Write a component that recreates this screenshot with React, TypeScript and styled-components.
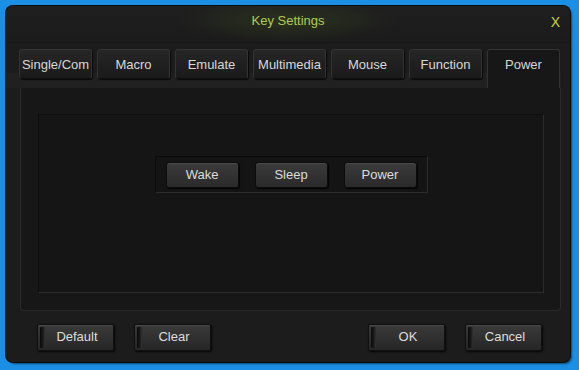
import styled, { createGlobalStyle } from "styled-components";

const GlobalStyle = createGlobalStyle`
  html, body {
    margin: 0;
    padding: 0;
    background: #1a8fe3;
  }
  body {
    font-family: "Liberation Sans", Arial, sans-serif;
  }
`;

const Frame = styled.div`
  width: 579px;
  height: 370px;
  box-sizing: border-box;
  padding: 6px 9px 8px 6px;
`;

const Window = styled.div`
  height: 100%;
  background: #1c1c1c;
  border-radius: 7px;
  box-shadow: 0 0 0 1px #0c0c0c, 2px 2px 2px rgba(0, 0, 0, 0.5);
  display: flex;
  flex-direction: column;
  overflow: hidden;
`;

const TitleBar = styled.div`
  height: 36px;
  position: relative;
  display: flex;
  align-items: center;
  justify-content: center;
  background:
    radial-gradient(ellipse 110px 22px at 50% 40%, rgba(90, 120, 30, 0.22), transparent),
    linear-gradient(#1f1f1f, #1b1b1b);
  border-bottom: 1px solid #171717;
`;

const Title = styled.span`
  color: #aecb55;
  font-size: 13px;
  margin-top: -7px;
`;

const Close = styled.span`
  position: absolute;
  right: 10px;
  top: 8px;
  color: #c8d23a;
  font-size: 14px;
`;

const TabRow = styled.div`
  display: flex;
  gap: 5px;
  padding: 6px 0 0 13px;
  height: 39px;
  align-items: flex-start;
  background: linear-gradient(#1c1c1c 0, #1c1c1c 30px, #202020 30px);
  margin-right: 9px;
`;

const Tab = styled.div<{ $active?: boolean }>`
  width: 73px;
  height: ${(p) => (p.$active ? "39px" : "30px")};
  box-sizing: border-box;
  display: flex;
  align-items: flex-start;
  justify-content: center;
  padding-top: 7px;
  font-size: 13px;
  color: #d8d8d8;
  border-radius: 3px 3px ${(p) => (p.$active ? "0 0" : "3px 3px")};
  border: 1px solid #333;
  border-bottom: ${(p) => (p.$active ? "none" : "1px solid #101010")};
  background: ${(p) =>
    p.$active ? "#171717" : "linear-gradient(#262626, #1a1a1a)"};
  box-shadow: ${(p) =>
    p.$active ? "none" : "1px 1px 1px rgba(0,0,0,0.7)"};
  white-space: nowrap;
`;

const Panel = styled.div`
  margin: 0 9px 0 14px;
  height: 223px;
  box-sizing: border-box;
  background: #171717;
  border: 1px solid #2a2a2a;
  border-top: none;
  border-radius: 0 0 4px 4px;
  padding: 26px 16px 17px 17px;
`;

const Inner = styled.div`
  height: 100%;
  box-sizing: border-box;
  border: 1px solid #2b2b2b;
  border-top-color: #0e0e0e;
  border-left-color: #0e0e0e;
  background: #151515;
  display: flex;
  justify-content: center;
  align-items: flex-start;
  padding-top: 41px;
`;

const Group = styled.div`
  width: 273px;
  height: 37px;
  box-sizing: border-box;
  border: 1px solid #2c2c2c;
  border-top-color: #0b0b0b;
  border-left-color: #0b0b0b;
  background: #141414;
  display: flex;
  justify-content: space-between;
  align-items: flex-start;
  padding: 5px 10px 0 10px;
`;

const GroupButton = styled.div`
  width: 73px;
  height: 26px;
  box-sizing: border-box;
  border-radius: 3px;
  border: 1px solid #0c0c0c;
  background: linear-gradient(#3b3b3b, #2a2a2a);
  box-shadow: inset 0 1px 0 #4a4a4a, 1px 1px 1px rgba(0, 0, 0, 0.8);
  color: #dcdcdc;
  font-size: 13px;
  display: flex;
  align-items: center;
  justify-content: center;
  padding-bottom: 2px;
`;

const Footer = styled.div`
  display: flex;
  justify-content: space-between;
  padding: 13px 28px 0 31px;
`;

const FooterGroup = styled.div`
  display: flex;
  gap: 20px;
`;

const FooterButton = styled.div`
  width: 77px;
  height: 27px;
  box-sizing: border-box;
  border-radius: 2px;
  border: 1px solid #101010;
  background: linear-gradient(#3a3a3a, #262626);
  box-shadow: inset 0 1px 0 #484848, 1px 1px 2px rgba(0, 0, 0, 0.8);
  color: #dedede;
  font-size: 13px;
  display: flex;
  align-items: center;
`;

const Stripe = styled.span`
  width: 5px;
  align-self: stretch;
  margin: 2px 0 2px 2px;
  background: linear-gradient(90deg, #0a0a0a, #1a1a1a 60%, #333);
  border-radius: 1px;
`;

const Label = styled.span`
  flex: 1;
  text-align: center;
  padding: 0 4px 2px 0;
`;

const tabs = ["Single/Com", "Macro", "Emulate", "Multimedia", "Mouse", "Function", "Power"];

export default function App() {
  return (
    <>
      <GlobalStyle />
      <Frame>
        <Window>
          <TitleBar>
            <Title>Key Settings</Title>
            <Close>X</Close>
          </TitleBar>
          <TabRow>
            {tabs.map((t) => (
              <Tab key={t} $active={t === "Power"}>
                {t}
              </Tab>
            ))}
          </TabRow>
          <Panel>
            <Inner>
              <Group>
                <GroupButton>Wake</GroupButton>
                <GroupButton>Sleep</GroupButton>
                <GroupButton>Power</GroupButton>
              </Group>
            </Inner>
          </Panel>
          <Footer>
            <FooterGroup>
              <FooterButton>
                <Stripe />
                <Label>Default</Label>
              </FooterButton>
              <FooterButton>
                <Stripe />
                <Label>Clear</Label>
              </FooterButton>
            </FooterGroup>
            <FooterGroup>
              <FooterButton>
                <Stripe />
                <Label>OK</Label>
              </FooterButton>
              <FooterButton>
                <Stripe />
                <Label>Cancel</Label>
              </FooterButton>
            </FooterGroup>
          </Footer>
        </Window>
      </Frame>
    </>
  );
}
